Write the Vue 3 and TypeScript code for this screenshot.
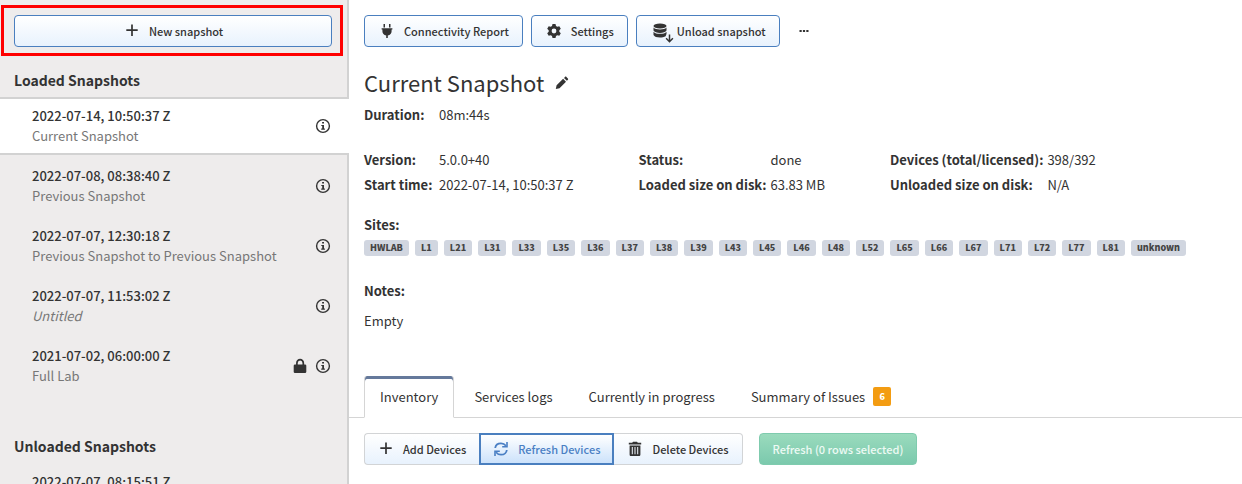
<script setup lang="ts">
import { ref } from 'vue'

interface Snapshot {
  date: string
  name: string
  untitled?: boolean
  locked?: boolean
}

const loaded: Snapshot[] = [
  { date: '2022-07-14, 10:50:37 Z', name: 'Current Snapshot' },
  { date: '2022-07-08, 08:38:40 Z', name: 'Previous Snapshot' },
  { date: '2022-07-07, 12:30:18 Z', name: 'Previous Snapshot to Previous Snapshot' },
  { date: '2022-07-07, 11:53:02 Z', name: 'Untitled', untitled: true },
  { date: '2021-07-02, 06:00:00 Z', name: 'Full Lab', locked: true },
]
const unloaded: Snapshot[] = [{ date: '2022-07-07, 08:15:51 Z', name: '' }]
const groups = [
  { title: 'Loaded Snapshots', items: loaded },
  { title: 'Unloaded Snapshots', items: unloaded },
]
const selected = ref(loaded[0].date)

const details: [string, string][][] = [
  [['Version:', '5.0.0+40'], ['Start time:', '2022-07-14, 10:50:37 Z']],
  [['Status:', 'done'], ['Loaded size on disk:', '63.83 MB']],
  [['Devices (total/licensed):', '398/392'], ['Unloaded size on disk:', 'N/A']],
]

const sites = [
  'HWLAB', 'L1', 'L21', 'L31', 'L33', 'L35', 'L36', 'L37', 'L38', 'L39', 'L43', 'L45',
  'L46', 'L48', 'L52', 'L65', 'L66', 'L67', 'L71', 'L72', 'L77', 'L81', 'unknown',
]

const tabs: { label: string; count?: number }[] = [
  { label: 'Inventory' },
  { label: 'Services logs' },
  { label: 'Currently in progress' },
  { label: 'Summary of Issues', count: 6 },
]
const activeTab = ref('Inventory')
</script>

<template>
  <div class="page">
    <aside class="sidebar">
      <div class="highlight">
        <button class="btn btn-outline btn-new" type="button">
          <svg class="icon" viewBox="0 0 16 16"><path d="M8 1.500v11.500M2.300 7.200h11.400" stroke="currentColor" stroke-width="1.700" fill="none" /></svg>
          New snapshot
        </button>
      </div>
      <section v-for="group in groups" :key="group.title" class="group">
        <h2>{{ group.title }}</h2>
        <ul>
          <li v-for="item in group.items" :key="item.date" :class="['row', { active: item.date === selected }]">
            <button class="row-text" type="button" @click="selected = item.date">
              <span class="row-date">{{ item.date }}</span>
              <span :class="['row-name', { untitled: item.untitled }]">{{ item.name }}</span>
            </button>
            <svg v-if="item.locked" class="icon" viewBox="0 0 16 16">
              <path d="M4.900 7V5a3.200 3.400 0 0 1 6.400 0v2" fill="none" stroke="currentColor" stroke-width="1.700" />
              <rect x="1.700" y="6.500" width="12.600" height="8.500" rx="1.300" fill="currentColor" />
            </svg>
            <button class="icon-btn" type="button" aria-label="Snapshot details">
              <svg class="icon" viewBox="0 0 16 16">
                <circle cx="8" cy="8" r="6.400" fill="none" stroke="currentColor" stroke-width="1.400" />
                <path d="M7.100 4h1.900v1.600H7.100zM6.300 6.900H9v3.700h.9v1.200H6.200v-1.200h1V8.100h-.9z" fill="currentColor" />
              </svg>
            </button>
          </li>
        </ul>
      </section>
    </aside>

    <main class="main">
      <div class="toolbar">
        <button class="btn btn-outline" type="button">
          <svg class="icon" viewBox="0 0 16 16"><path d="M4.500 1h1.500v3.400H4.500zM10 1h1.500v3.400H10zM2.600 5.300h10.800v1.300h-.8v1.600c0 2.300-1.400 3.700-3.800 4.200V15H7.200v-2.600C4.800 11.900 3.400 10.500 3.400 8.200V6.600h-.8z" fill="currentColor" /></svg>
          Connectivity Report
        </button>
        <button class="btn btn-outline" type="button">
          <svg class="icon" viewBox="0 0 16 16">
            <path fill-rule="evenodd" d="M6.500 1h3l.5 2 1.300.8 2-.6 1.500 2.600L13.300 7.200v1.600l1.500 1.400-1.500 2.600-2-.6-1.300.8-.5 2h-3l-.5-2-1.300-.8-2 .6-1.500-2.600 1.500-1.400V7.200L1.200 5.800l1.500-2.600 2 .6L6 3zM8 5.600a2.400 2.400 0 1 0 0 4.800 2.400 2.400 0 0 0 0-4.800z" fill="currentColor" />
          </svg>
          Settings
        </button>
        <button class="btn btn-outline btn-db" type="button">
          <svg class="icon-db" viewBox="0 0 20 20">
            <ellipse cx="7" cy="5" rx="6.500" ry="2.400" fill="currentColor" />
            <path d="M.5 6.500C1.800 8.100 4 8.400 7 8.400s5.200-.3 6.500-1.900v3C12.800 11.200 10 11.900 7 11.900S1.200 11.200.5 9.500zM.5 10.700c1.300 1.700 3.500 2.100 6.500 2.100s5.200-.4 6.500-2.100v2.300l-.9 2.300c-1.500.9-3.600 1.200-5.600 1.200-3 0-5.800-.8-6.500-2.500z" fill="currentColor" />
            <path d="M16.500 13.500v7M13.100 17.300l3.400 3.400 3.400-3.400" fill="none" stroke="currentColor" stroke-width="1.500" />
          </svg>
          Unload snapshot
        </button>
        <button class="icon-btn more" type="button" aria-label="More actions">
          <svg class="icon" viewBox="0 0 16 16"><path d="M3.500 7h2.200v2H3.500zM6.900 7h2.200v2H6.900zM10.300 7h2.200v2h-2.200z" fill="currentColor" /></svg>
        </button>
      </div>

      <div class="title">
        <h1>Current Snapshot</h1>
        <button class="icon-btn" type="button" aria-label="Rename snapshot">
          <svg class="icon" viewBox="0 0 16 16"><path d="M1.800 15l.8-3.700 6.500-6.500L12 7.700l-6.500 6.500zM10 3.900l1-1c.4-.4 1-.4 1.400 0l1.500 1.500c.4.400.4 1 0 1.400l-1 1z" fill="currentColor" /></svg>
        </button>
      </div>

      <dl class="facts">
        <dt>Duration:</dt>
        <dd>08m:44s</dd>
      </dl>

      <div class="details">
        <dl v-for="(column, i) in details" :key="i" class="facts">
          <template v-for="[label, value] in column" :key="label">
            <dt>{{ label }}</dt>
            <dd>{{ value }}</dd>
          </template>
        </dl>
      </div>

      <h3>Sites:</h3>
      <ul class="sites">
        <li v-for="site in sites" :key="site">{{ site }}</li>
      </ul>

      <h3>Notes:</h3>
      <p class="notes">Empty</p>

      <div class="tabs" role="tablist">
        <button
          v-for="tab in tabs"
          :key="tab.label"
          type="button"
          role="tab"
          :aria-selected="tab.label === activeTab"
          :class="['tab', { current: tab.label === activeTab }]"
          @click="activeTab = tab.label"
        >
          {{ tab.label }}
          <span v-if="tab.count" class="count">{{ tab.count }}</span>
        </button>
      </div>

      <div class="actions">
        <div class="btn-group">
          <button class="btn" type="button">
            <svg class="icon" viewBox="0 0 16 16"><path d="M8 1.500v11.500M2.300 7.200h11.400" stroke="currentColor" stroke-width="1.700" fill="none" /></svg>
            Add Devices
          </button>
          <button class="btn pressed" type="button">
            <svg class="icon" viewBox="0 0 16 16">
              <path d="M2.200 7C2.600 3.900 5 2.300 8 2.300c2.200 0 3.700.9 5 2.500M13.800 9c-.4 3.100-2.800 4.700-5.800 4.700-2.200 0-3.700-.9-5-2.500" fill="none" stroke="currentColor" stroke-width="1.800" />
              <path d="M14.800 1v5.600H9.200V5h4V1zM1.200 15V9.400h5.600V11h-4v4z" fill="currentColor" />
            </svg>
            Refresh Devices
          </button>
          <button class="btn" type="button">
            <svg class="icon" viewBox="0 0 16 16">
              <path fill-rule="evenodd" d="M6 .8h4l.8 1h3.400v1.600H1.800V1.800h3.400zM2.600 4.400h10.800V13.500c0 1-.6 1.600-1.500 1.600H4.100c-.9 0-1.500-.6-1.500-1.600zM4.800 6v7.200h1V6zM7.500 6v7.200h1V6zM10.200 6v7.200h1V6z" fill="currentColor" />
            </svg>
            Delete Devices
          </button>
        </div>
        <button class="btn btn-green" type="button" disabled>Refresh (0 rows selected)</button>
      </div>
    </main>
  </div>
</template>

<style>
body {
  margin: 0;
  background: #fff;
}
</style>

<style scoped>
.page {
  display: flex;
  height: 100vh;
  overflow: hidden;
  font: 400 13px/20px "Noto Sans CJK SC", "Noto Sans", sans-serif;
  color: #333;
}

button {
  font: inherit;
  color: inherit;
  cursor: pointer;
}

h1, h2, h3, ul, dl, dd, p {
  margin: 0;
  padding: 0;
  list-style: none;
}

.icon {
  width: 16px;
  height: 16px;
  flex: none;
}

.icon-btn {
  display: flex;
  padding: 0;
  border: 0;
  background: none;
}

.sidebar {
  flex: 0 0 349px;
  box-sizing: border-box;
  border-right: 2px solid #d2d2d2;
  background: #eeecec;
}

.highlight {
  margin: 5px 4px 0 1px;
  padding: 7px 8px 6px 10px;
  border: 3px solid #f00;
}

.btn {
  display: flex;
  align-items: center;
  justify-content: center;
  gap: 9px;
  height: 32px;
  box-sizing: border-box;
  padding: 0 13px 0 14px;
  border: 1px solid #d2d4d6;
  border-radius: 4px;
  background: linear-gradient(#fff, #e8f2fd);
  font-size: 11px;
  font-weight: 500;
  white-space: nowrap;
}

.btn-outline {
  border-color: #4a7fbf;
}

.btn-new {
  width: 100%;
}

.group {
  padding-top: 14px;
}

.group + .group {
  padding-top: 41px;
}

h2 {
  padding: 0 14px 7px;
  font-size: 14px;
  line-height: 20px;
  font-weight: 700;
}

.row {
  display: flex;
  align-items: center;
  gap: 7px;
  margin-bottom: 2px;
  padding: 7px 16px 7px 32px;
  border: solid transparent;
  border-width: 2px 0;
}

.row:last-child {
  margin-bottom: 0;
}

.row.active {
  margin-right: -2px;
  padding-right: 18px;
  border-color: #d2d2d2;
  background: #fff;
}

.row-text {
  flex: 1;
  min-width: 0;
  padding: 0;
  border: 0;
  background: none;
  text-align: left;
}

.row-date,
.row-name {
  display: block;
  min-height: 20px;
}

.row-date {
  font-weight: 500;
}

.row-name {
  color: #777;
}

.untitled {
  font-style: italic;
}

.main {
  flex: 1;
  min-width: 0;
}

.toolbar {
  display: flex;
  align-items: center;
  gap: 8px;
  padding: 15px 15px 0;
}

.btn-db {
  gap: 4px;
  padding-left: 16px;
}

.icon-db {
  width: 20px;
  height: 20px;
  overflow: visible;
}

.more {
  margin-left: 8px;
}

.title {
  display: flex;
  align-items: center;
  gap: 10px;
  padding: 20px 15px 5px;
}

h1 {
  font-size: 22px;
  line-height: 30px;
  font-weight: 400;
}

.facts {
  display: grid;
  grid-template-columns: auto auto;
  justify-content: start;
  column-gap: 4px;
  line-height: 25px;
}

.main > .facts {
  padding: 0 15px;
}

dt,
h3 {
  font-weight: 700;
}

dt {
  min-width: 71px;
}

.details {
  display: flex;
  gap: 65px;
  padding: 20px 15px 18px;
}

h3 {
  padding: 0 15px;
  font-size: 13px;
  line-height: 20px;
}

.sites {
  display: flex;
  flex-wrap: wrap;
  gap: 6px;
  padding: 5px 15px 25px;
}

.sites li {
  padding: 0 6px;
  border-radius: 3px;
  background: #d1d6e0;
  color: #444;
  font-size: 9px;
  line-height: 16px;
  font-weight: 900;
}

.notes {
  padding: 10px 15px 45px;
}

.tabs {
  display: flex;
  padding: 0 15px;
  border-bottom: 1px solid #d5d5d5;
}

.tab {
  display: flex;
  align-items: center;
  gap: 8px;
  height: 41px;
  box-sizing: content-box;
  margin-right: 4px;
  margin-bottom: -1px;
  padding: 0 15px;
  border: 1px solid transparent;
  border-width: 0 1px 1px;
  background: none;
}

.tab.current {
  border-color: #d5d5d5;
  border-bottom-color: #fff;
  border-radius: 3px 3px 0 0;
  background: #fff;
  box-shadow: inset 0 3px #65799b;
}

.count {
  width: 18px;
  border-radius: 2px;
  background: #f39c12;
  color: #fff;
  font-size: 9px;
  line-height: 19px;
  font-weight: 900;
  text-align: center;
}

.actions {
  display: flex;
  gap: 16px;
  padding: 15px;
}

.actions .btn {
  padding: 0 13px;
}

.btn-group {
  display: flex;
}

.btn-group .btn:first-child {
  border-right: 0;
  border-radius: 4px 0 0 4px;
}

.btn-group .btn:last-child {
  border-left: 0;
  border-radius: 0 4px 4px 0;
}

.btn-group .pressed {
  padding: 0 12px;
  border: 2px solid #4a7fbf;
  border-radius: 0;
  background: linear-gradient(#fff, #cce2fb);
  color: #4a7fc4;
}

.actions .btn-green {
  border-color: #7fcbae;
  background: linear-gradient(#9adbbd, #7bc9ad);
  color: #eefaf4;
  cursor: default;
}
</style>
